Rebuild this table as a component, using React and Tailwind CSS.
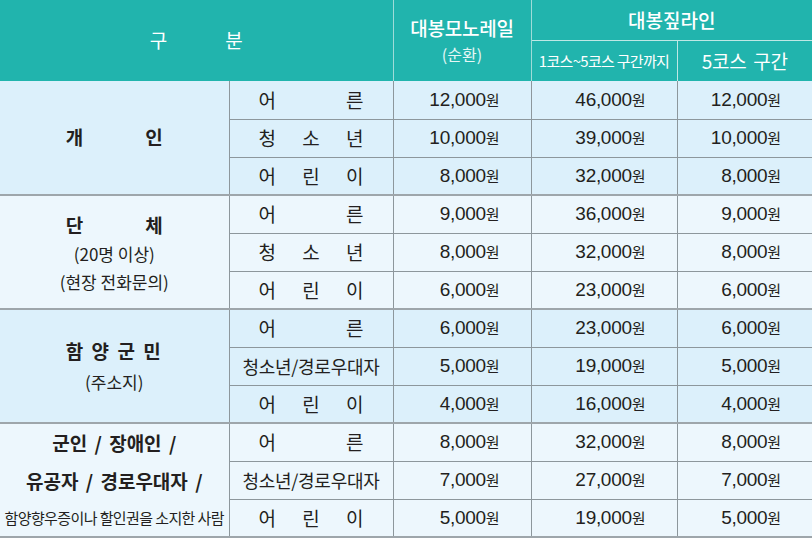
import React from 'react';

const KR = "font-['Noto_Sans_CJK_KR',sans-serif]";

const groups = [
  {
    bg: 'bg-[#dcf0fb]',
    label: (
      <div className="flex justify-center gap-[62px] text-[19px] font-bold">
        <span>개</span>
        <span>인</span>
      </div>
    ),
    rows: [
      ['adult', '12,000', '46,000', '12,000'],
      ['youth', '10,000', '39,000', '10,000'],
      ['child', '8,000', '32,000', '8,000'],
    ],
  },
  {
    bg: 'bg-[#edf7fd]',
    label: (
      <div className="flex flex-col items-center">
        <div className="flex justify-center gap-[62px] text-[19px] font-bold leading-[31px]">
          <span>단</span>
          <span>체</span>
        </div>
        <div className="text-[17px] leading-[28px]">(20명 이상)</div>
        <div className="text-[17px] leading-[28px]">(현장 전화문의)</div>
      </div>
    ),
    rows: [
      ['adult', '9,000', '36,000', '9,000'],
      ['youth', '8,000', '32,000', '8,000'],
      ['child', '6,000', '23,000', '6,000'],
    ],
  },
  {
    bg: 'bg-[#dcf0fb]',
    label: (
      <div className="flex flex-col items-center">
        <div className="text-[19px] font-bold leading-[32px] tracking-[2px]">함 양 군 민</div>
        <div className="text-[17px] leading-[30px]">(주소지)</div>
      </div>
    ),
    rows: [
      ['adult', '6,000', '23,000', '6,000'],
      ['senior', '5,000', '19,000', '5,000'],
      ['child', '4,000', '16,000', '4,000'],
    ],
  },
  {
    bg: 'bg-[#edf7fd]',
    label: (
      <div className="flex flex-col items-center">
        <div className="text-[19px] font-bold leading-[38px] [word-spacing:3px]">군인 / 장애인 /</div>
        <div className="text-[19px] font-bold leading-[38px] [word-spacing:3px]">유공자 / 경로우대자 /</div>
        <div className="text-[15px] leading-[36px] tracking-[-0.6px] whitespace-nowrap">함양향우증이나 할인권을 소지한 사람</div>
      </div>
    ),
    rows: [
      ['adult', '8,000', '32,000', '8,000'],
      ['senior', '7,000', '27,000', '7,000'],
      ['child', '5,000', '19,000', '5,000'],
    ],
  },
];

function Kind({ k }) {
  if (k === 'senior') {
    return <div className="text-center text-[18px] tracking-[-0.3px] whitespace-nowrap">청소년/경로우대자</div>;
  }
  const chars = k === 'adult' ? ['어', '른'] : k === 'youth' ? ['청', '소', '년'] : ['어', '린', '이'];
  return (
    <div className="flex justify-between px-[29px] text-[19px]">
      {chars.map((c) => (
        <span key={c}>{c}</span>
      ))}
    </div>
  );
}

function Price({ v }) {
  return (
    <div className="text-right pr-[31px] whitespace-nowrap">
      <span className="font-['Liberation_Sans',sans-serif] text-[19px] tracking-[-0.3px]">{v}</span>
      <span className="text-[15px]">원</span>
    </div>
  );
}

export default function App() {
  return (
    <div className={`w-[812px] h-[541px] bg-white overflow-hidden ${KR} text-[#231f20]`}>
      <table className="w-[812px] table-fixed border-collapse">
        <colgroup>
          <col className="w-[229px]" />
          <col className="w-[164px]" />
          <col className="w-[138px]" />
          <col className="w-[146px]" />
          <col className="w-[135px]" />
        </colgroup>
        <thead className="bg-[#21b4ad] text-white">
          <tr className="h-[40px]">
            <th colSpan={2} rowSpan={2} className="font-normal text-[19px] border-r border-[#9fdcd8]">
              <div className="flex justify-center gap-[58px]">
                <span>구</span>
                <span>분</span>
              </div>
            </th>
            <th rowSpan={2} className="border-r border-[#9fdcd8] align-middle">
              <div className="text-[19px] font-medium tracking-[-0.2px] leading-[27px] whitespace-nowrap">대봉모노레일</div>
              <div className="text-[16px] font-normal leading-[26px] text-[#e6f7f6]">(순환)</div>
            </th>
            <th colSpan={2} className="text-[19px] font-medium border-b border-[#bfe8e5]">
              대봉짚라인
            </th>
          </tr>
          <tr className="h-[41px]">
            <th className="text-[15px] font-normal tracking-[-0.7px] whitespace-nowrap border-r border-[#bfe8e5]">
              1코스~5코스 구간까지
            </th>
            <th className="text-[19px] font-normal tracking-[-0.3px] [word-spacing:3px]">5코스 구간</th>
          </tr>
        </thead>
        <tbody>
          {groups.map((g, gi) =>
            g.rows.map((r, ri) => (
              <tr
                key={`${gi}-${ri}`}
                className={`h-[38px] ${g.bg} ${ri === 2 ? 'border-b-2 border-[#9ea6ab]' : 'border-b border-[#8d979c]'}`}
              >
                {ri === 0 && (
                  <td rowSpan={3} className="p-0 align-middle border-r border-[#8d979c]">
                    {g.label}
                  </td>
                )}
                <td className="p-0 border-r border-[#8d979c]">
                  <Kind k={r[0]} />
                </td>
                <td className="p-0 border-r border-[#8d979c]">
                  <Price v={r[1]} />
                </td>
                <td className="p-0 border-r border-[#8d979c]">
                  <Price v={r[2]} />
                </td>
                <td className="p-0">
                  <Price v={r[3]} />
                </td>
              </tr>
            ))
          )}
        </tbody>
      </table>
    </div>
  );
}
